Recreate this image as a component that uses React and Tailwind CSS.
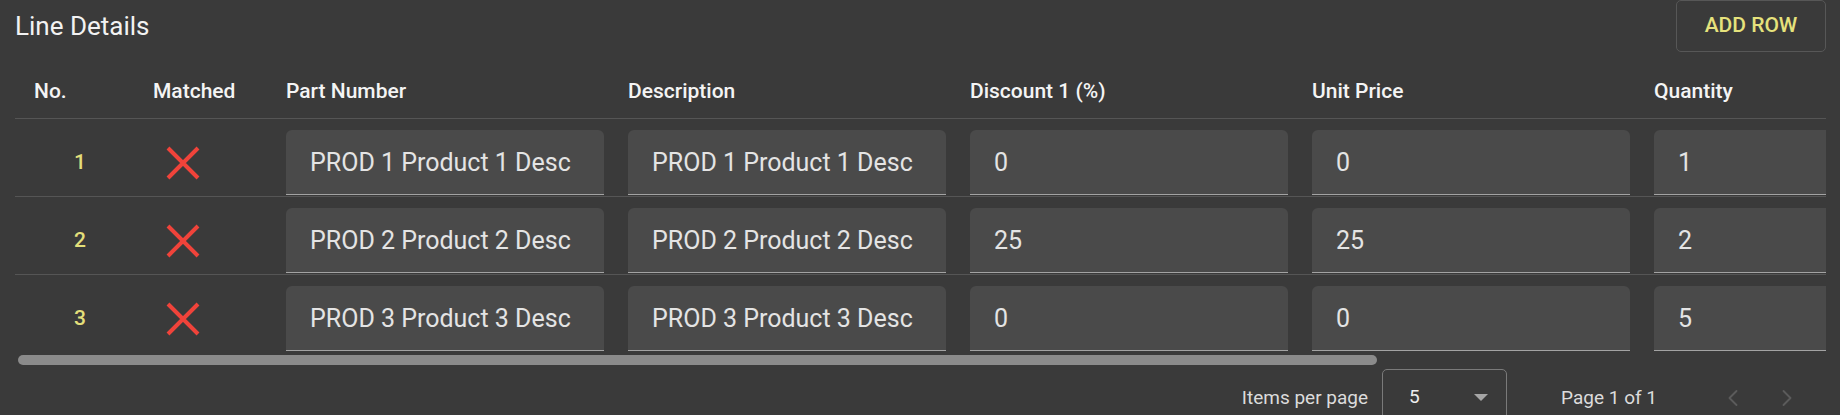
import { ChevronLeft, ChevronRight } from "lucide-react";

const rows = [
  { no: 1, part: "PROD 1 Product 1 Desc", desc: "PROD 1 Product 1 Desc", disc: "0", price: "0", qty: "1" },
  { no: 2, part: "PROD 2 Product 2 Desc", desc: "PROD 2 Product 2 Desc", disc: "25", price: "25", qty: "2" },
  { no: 3, part: "PROD 3 Product 3 Desc", desc: "PROD 3 Product 3 Desc", disc: "0", price: "0", qty: "5" },
];

const columns = [
  { key: "part", label: "Part Number" },
  { key: "desc", label: "Description" },
  { key: "disc", label: "Discount 1 (%)" },
  { key: "price", label: "Unit Price" },
  { key: "qty", label: "Quantity" },
];

function Cross() {
  return (
    <svg width="34" height="34" viewBox="0 0 34 34" className="block">
      <path d="M2 2 L32 32 M32 2 L2 32" stroke="#f0433a" strokeWidth="4" />
    </svg>
  );
}

function Field({ value }) {
  return (
    <input
      readOnly
      value={value}
      className="h-[65px] w-[318px] rounded-t-[6px] border-b border-[#a3a3a3] bg-[#4a4a4a] pl-[24px] font-['Roboto','Liberation_Sans',sans-serif] text-[25px] text-[#e4e4e4] outline-none"
    />
  );
}

export default function App() {
  return (
    <div className="h-[415px] w-[1840px] overflow-hidden bg-[#3a3a3a] font-['Roboto','Liberation_Sans',sans-serif] text-white">
      {/* Title bar */}
      <div className="flex h-[52px] items-center justify-between pl-[15px] pr-[14px]">
        <h2 className="text-[26px] font-normal text-[#f2f2f2]">Line Details</h2>
        <button className="h-[52px] w-[150px] rounded-[5px] border border-[#575757] text-[21px] font-medium text-[#e6e27c]">
          ADD ROW
        </button>
      </div>

      <div className="ml-[15px] mt-[14px] w-[1811px] overflow-hidden">
        <div className="w-[2414px]">
          <div className="flex h-[53px] items-center border-b border-[#555555] text-[21px] font-medium text-[#f4f4f4]">
            <div className="w-[119px] shrink-0 pl-[19px]">No.</div>
            <div className="w-[133px] shrink-0 pl-[19px]">Matched</div>
            {columns.map((c) => (
              <div key={c.key} className="w-[342px] shrink-0 pl-[19px]">
                {c.label}
              </div>
            ))}
          </div>

          {rows.map((r, i) => (
            <div
              key={r.no}
              className={
                i < rows.length - 1
                  ? "flex items-center border-b border-[#555555] pb-[1px] pt-[11px]"
                  : "flex items-center pt-[11px]"
              }
            >
              <div className="w-[119px] shrink-0 pl-[19px]">
                <div className="w-[92px] text-center text-[21px] font-medium text-[#e3df7a]">{r.no}</div>
              </div>
              <div className="w-[133px] shrink-0 pl-[19px]">
                <div className="flex w-[60px] justify-center">
                  <Cross />
                </div>
              </div>
              {columns.map((c) => (
                <div key={c.key} className="w-[342px] shrink-0 pl-[19px]">
                  <Field value={r[c.key]} />
                </div>
              ))}
            </div>
          ))}
        </div>

        {/* Horizontal scrollbar */}
        <div className="flex h-[18px] items-center pl-[3px]">
          <div className="h-[10px] w-[1359px] rounded-full bg-[#8b8b8b]" />
        </div>
      </div>

      {/* Paginator */}
      <div className="flex h-[58px] items-center justify-end pr-[29px] text-[19px] text-[#dcdcdc]">
        <span className="mr-[14px]">Items per page</span>
        <div className="flex h-[56px] w-[125px] items-center justify-between self-start rounded-[5px] border border-[#7a7a7a] pl-[26px] pr-[18px]">
          <span className="text-[#eeeeee]">5</span>
          <svg width="14" height="7" viewBox="0 0 14 7">
            <polygon points="0,0 14,0 7,7" fill="#a6a6a6" />
          </svg>
        </div>
        <span className="ml-[54px] mr-[52px]">Page 1 of 1</span>
        <button className="flex h-[48px] w-[48px] items-center justify-center text-[#5b5b5b]">
          <ChevronLeft size={28} strokeWidth={1.6} />
        </button>
        <button className="ml-[6px] flex h-[48px] w-[48px] items-center justify-center text-[#5b5b5b]">
          <ChevronRight size={28} strokeWidth={1.6} />
        </button>
      </div>
    </div>
  );
}
